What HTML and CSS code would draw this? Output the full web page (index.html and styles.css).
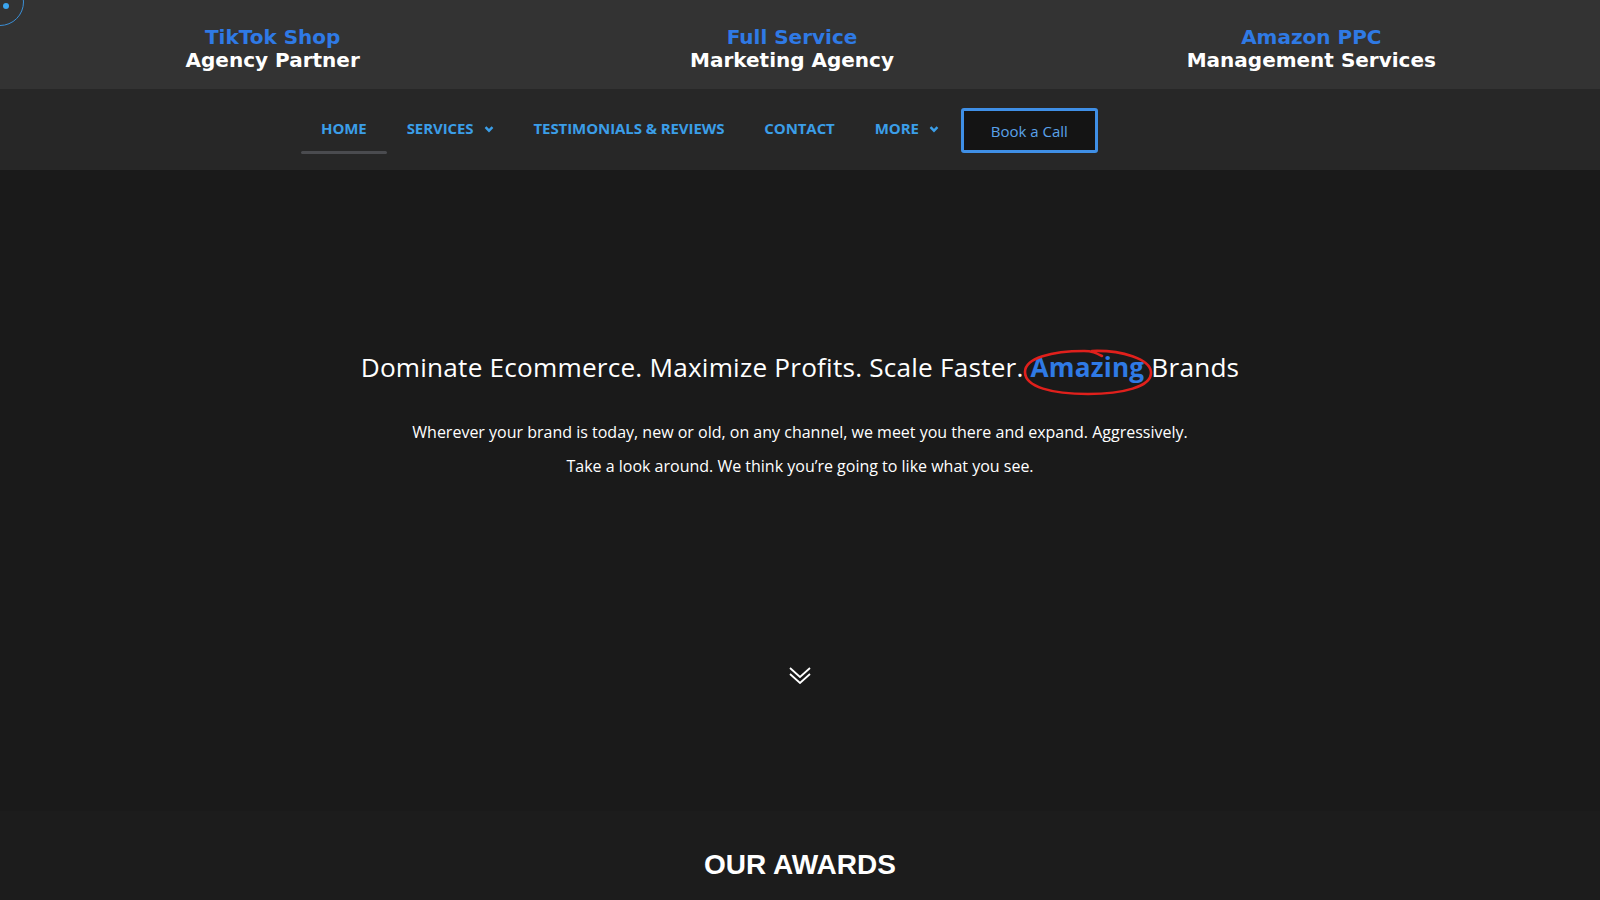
FILE: index.html
```html
<!DOCTYPE html>
<html lang="en">
<head>
<meta charset="utf-8">
<title>Amazing Brands</title>
<link rel="stylesheet" href="styles.css">
</head>
<body>
<div class="cursor"><span class="cursor-dot"></span></div>
<header class="topbar">
  <div class="tag"><span class="tag-blue">TikTok Shop</span><span class="tag-white">Agency Partner</span></div>
  <div class="tag"><span class="tag-blue">Full Service</span><span class="tag-white">Marketing Agency</span></div>
  <div class="tag"><span class="tag-blue">Amazon PPC</span><span class="tag-white">Management Services</span></div>
</header>
<nav class="mainnav">
  <ul class="menu">
    <li class="menu-item active">HOME</li>
    <li class="menu-item">SERVICES <svg class="caret" viewBox="0 0 10 10" width="10" height="10"><path d="M1.5 3.2 L5 6.7 L8.5 3.2" fill="none" stroke="currentColor" stroke-width="2.4"/></svg></li>
    <li class="menu-item">TESTIMONIALS &amp; REVIEWS</li>
    <li class="menu-item">CONTACT</li>
    <li class="menu-item">MORE <svg class="caret" viewBox="0 0 10 10" width="10" height="10"><path d="M1.5 3.2 L5 6.7 L8.5 3.2" fill="none" stroke="currentColor" stroke-width="2.4"/></svg></li>
  </ul>
  <a class="book-btn">Book a Call</a>
</nav>
<section class="hero">
  <h1 class="hero-title">Dominate Ecommerce. Maximize Profits. Scale Faster. <span class="amazing">Amazing<svg class="ring" viewBox="0 0 132 50" preserveAspectRatio="none"><path d="M70 4 C 100 3, 128 12, 129 25 C 130 40, 100 47, 66 47 C 30 47, 3 40, 3 25 C 3 11, 30 4, 62 4 C 70 4, 74 6, 80 9" fill="none" stroke="#e0201c" stroke-width="2.6" stroke-linecap="round"/></svg></span> Brands</h1>
  <p class="hero-text">Wherever your brand is today, new or old, on any channel, we meet you there and expand. Aggressively.</p>
  <p class="hero-text">Take a look around. We think you’re going to like what you see.</p>
  <svg class="chevrons" viewBox="0 0 22 18" width="22" height="18"><path d="M1 2 L11 11 L21 2 M1 8 L11 17 L21 8" fill="none" stroke="#ffffff" stroke-width="1.8"/></svg>
</section>
<section class="awards">
  <h2 class="awards-title">OUR AWARDS</h2>
</section>
</body>
</html>
```

FILE: styles.css
```css
* { box-sizing: border-box; }
html, body { margin: 0; padding: 0; }
body {
  background: #1a1a1a;
  font-family: "Open Sans", "DejaVu Sans", sans-serif;
  overflow: hidden;
  height: 900px;
}
.cursor {
  position: absolute;
  left: -24px;
  top: -22px;
  width: 48px;
  height: 48px;
  border: 1px solid #3b8fd6;
  border-radius: 50%;
  z-index: 10;
}
.cursor-dot {
  position: absolute;
  left: 26px;
  top: 24px;
  width: 6px;
  height: 6px;
  border-radius: 50%;
  background: #3ba5f0;
}
.topbar {
  height: 89px;
  background: #333333;
  display: grid;
  grid-template-columns: repeat(3, 1fr);
  padding: 0 29px 0 13px;
  align-items: center;
}
.tag {
  display: flex;
  flex-direction: column;
  align-items: center;
  font-family: "DejaVu Sans", sans-serif;
  font-weight: bold;
  font-size: 20px;
  line-height: 23px;
  padding-top: 8px;
}
.tag-blue { color: #2f7ae5; }
.tag-white { color: #ffffff; }
.mainnav {
  height: 81px;
  background: #272727;
  display: flex;
  align-items: center;
  padding-left: 301px;
}
.menu {
  list-style: none;
  margin: 0;
  padding: 0;
  display: flex;
  height: 100%;
}
.menu-item {
  display: flex;
  align-items: center;
  gap: 10px;
  padding: 0 20px 4px;
  font-size: 15px;
  font-weight: 700;
  color: #3b9ee8;
  position: relative;
  letter-spacing: -0.08px;
}
.menu-item.active::after {
  content: "";
  position: absolute;
  left: 0;
  right: 0;
  bottom: 16px;
  height: 3px;
  border-radius: 2px;
  background: #4a4b4f;
}
.caret { color: #3b9ee8; margin-top: 2px; }
.book-btn {
  display: flex;
  align-items: center;
  justify-content: center;
  width: 137px;
  height: 45px;
  border: 3px solid #3f8fe6;
  border-radius: 3px;
  background: #141414;
  color: #5aa2ea;
  font-size: 15px;
  margin-top: 2px;
  margin-left: 2px;
}
.hero {
  height: 641px;
  background: #1a1a1a;
  display: flex;
  flex-direction: column;
  align-items: center;
  padding-top: 175px;
}
.hero-title {
  margin: 0;
  font-weight: 400;
  font-size: 26.2px;
  color: #ffffff;
  line-height: 44px;
  letter-spacing: 0.2px;
}
.amazing {
  position: relative;
  color: #2f7ae5;
  font-weight: 700;
}
.ring {
  position: absolute;
  left: -9px;
  top: -2px;
  width: 132px;
  height: 50px;
}
.hero-text {
  margin: 0;
  color: #ffffff;
  font-size: 16px;
  line-height: 34px;
}
.hero-title + .hero-text { margin-top: 26px; }
.chevrons { margin-top: 183px; }
.awards {
  background: #1c1c1c;
  height: 89px;
  display: flex;
  justify-content: center;
  padding-top: 37px;
}
.awards-title {
  margin: 0;
  font-family: "Liberation Sans", Arial, sans-serif;
  font-weight: bold;
  font-size: 28px;
  color: #ffffff;
  line-height: 34px;
}
```
